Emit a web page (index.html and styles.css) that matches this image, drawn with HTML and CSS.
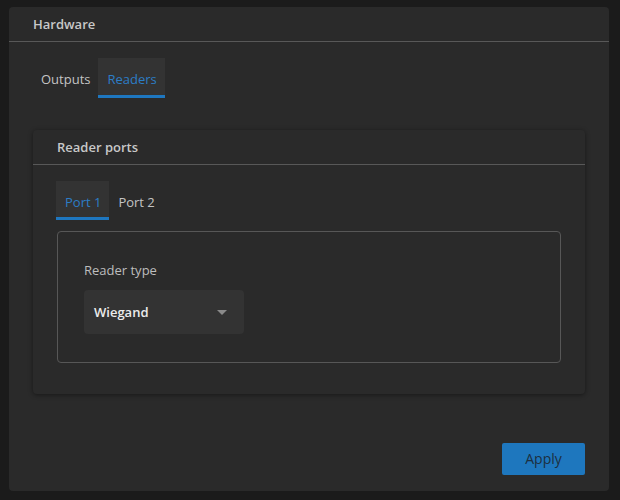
FILE: index.html
```html
<!DOCTYPE html>
<html>
<head>
<meta charset="utf-8">
<link rel="stylesheet" href="styles.css">
</head>
<body>
<div class="card">
  <div class="card-header">Hardware</div>
  <div class="card-body">
    <div class="tabs">
      <div class="tab">Outputs</div>
      <div class="tab active">Readers</div>
    </div>
    <div class="inner-card">
      <div class="inner-header">Reader ports</div>
      <div class="inner-body">
        <div class="tabs">
          <div class="tab sub active">Port 1</div>
          <div class="tab sub">Port 2</div>
        </div>
        <div class="fieldset">
          <div class="label">Reader type</div>
          <div class="select">
            <span class="select-value">Wiegand</span>
            <span class="caret"></span>
          </div>
        </div>
      </div>
    </div>
    <button class="apply">Apply</button>
  </div>
</div>
</body>
</html>
```
FILE: styles.css
```css
html, body {
  margin: 0;
  padding: 0;
  background: #1b1b1b;
}
body {
  padding: 7px 0 0 9px;
  font-family: "Open Sans", "Noto Sans", sans-serif;
  font-size: 13px;
  color: #c4c4c4;
}
.card {
  width: 600px;
  height: 484px;
  background: #2a2a2a;
  border-radius: 4px;
  display: flex;
  flex-direction: column;
  box-sizing: border-box;
}
.card-header {
  height: 34px;
  line-height: 34px;
  padding: 0 24px;
  border-bottom: 1px solid #585858;
  font-weight: 600;
  color: #c8c8c8;
}
.card-body {
  flex: 1;
  display: flex;
  flex-direction: column;
  padding: 16px 24px 16px;
}
.tabs {
  display: flex;
  margin-left: -1px;
}
.tab {
  height: 40px;
  line-height: 42px;
  padding: 0 8px 0 9px;
  box-sizing: border-box;
  color: #c4c4c4;
}
.tab.active {
  background: #333333;
  color: #2c7dc6;
  border-bottom: 3px solid #1e77c0;
  line-height: 39px;
  padding-top: 2px;
}
.tab.sub {
  height: 39px;
  line-height: 42px;
}
.tab.sub.active {
  padding-top: 2px;
  line-height: 38px;
}
.inner-card {
  margin-top: 32px;
  height: 264px;
  background: #2a2a2a;
  border-radius: 4px;
  box-shadow: 0 1px 5px rgba(0, 0, 0, 0.45);
  display: flex;
  flex-direction: column;
}
.inner-header {
  height: 34px;
  line-height: 34px;
  padding: 0 24px;
  border-bottom: 1px solid #585858;
  font-weight: 600;
  color: #c8c8c8;
}
.inner-body {
  padding: 16px 24px 0;
}
.fieldset {
  margin-top: 11px;
  height: 132px;
  box-sizing: border-box;
  border: 1px solid #575757;
  border-radius: 4px;
  padding: 29px 26px 0;
}
.label {
  line-height: 18px;
  color: #bdbdbd;
}
.select {
  margin-top: 11px;
  width: 160px;
  height: 44px;
  background: #333333;
  border-radius: 4px;
  display: flex;
  align-items: center;
  justify-content: space-between;
  padding: 0 17px 0 10px;
  box-sizing: border-box;
}
.select-value {
  font-weight: 600;
  color: #ececec;
  font-size: 13px;
}
.caret {
  width: 0;
  height: 0;
  border-left: 5px solid transparent;
  border-right: 5px solid transparent;
  border-top: 5px solid #8a8a8a;
}
.apply {
  margin-top: auto;
  align-self: flex-end;
  width: 83px;
  height: 32px;
  border: none;
  border-radius: 2px;
  background: #1e77be;
  color: #1d2f40;
  font-family: "Open Sans", "Noto Sans", sans-serif;
  font-size: 14px;
  padding: 0 0 2px;
}
```
